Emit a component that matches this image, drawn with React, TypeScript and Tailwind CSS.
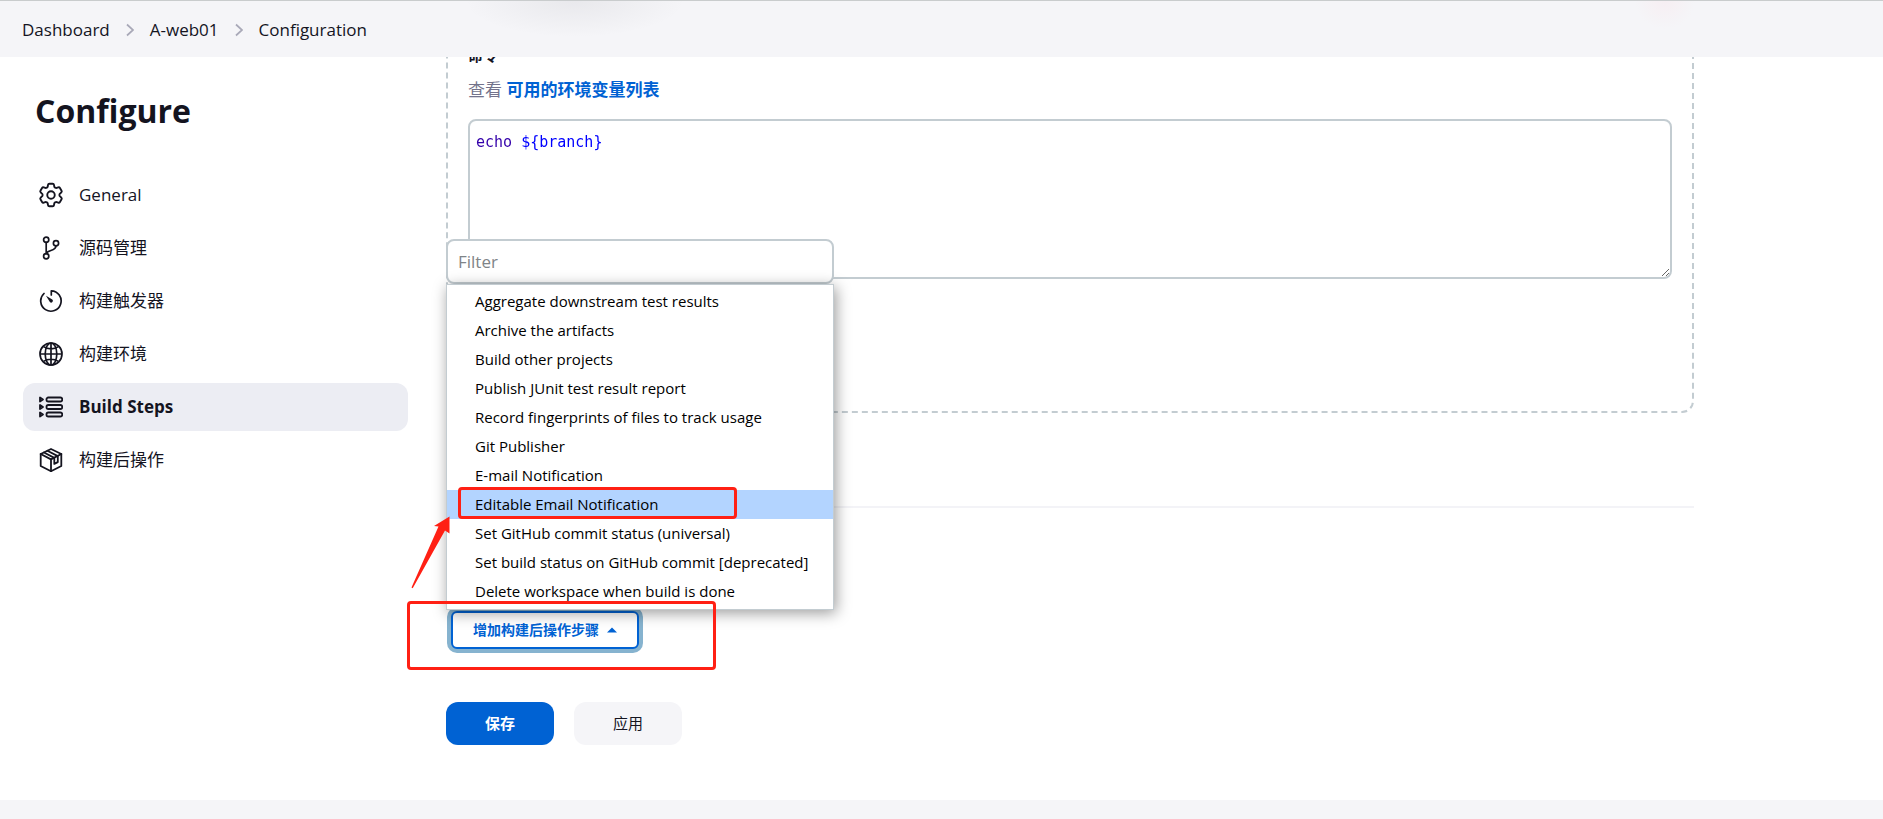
import { HiOutlineCog6Tooth } from 'react-icons/hi2'
import type { ReactNode } from 'react'

function BranchIcon() {
    return (
        <svg
            viewBox="0 0 24 24"
            className="h-6 w-6"
            fill="none"
            stroke="currentColor"
            strokeWidth="1.7"
            strokeLinecap="round"
        >
            <circle cx="7.2" cy="3.8" r="2.6" />
            <circle cx="7.2" cy="20.2" r="2.6" />
            <circle cx="17" cy="7.2" r="2.6" />
            <path d="M7.200 6.400v11.200M17 9.800c0 5.700-8.300 3.700-9.800 7.800" />
        </svg>
    )
}

function TimerIcon() {
    return (
        <svg
            viewBox="0 0 24 24"
            className="h-6 w-6"
            fill="none"
            stroke="currentColor"
            strokeWidth="1.7"
            strokeLinecap="round"
            strokeLinejoin="round"
        >
            <path d="M5 4.500A10.200 10.200 0 1 0 12.300 1.800V6" />
            <path
                d="M7 6.800l6.300 3.800a1.700 1.700 0 1 1-2.400 2.400z"
                fill="currentColor"
                stroke="none"
            />
        </svg>
    )
}

function GlobeIcon() {
    return (
        <svg
            viewBox="0 0 24 24"
            className="h-6 w-6"
            fill="none"
            stroke="currentColor"
            strokeWidth="1.7"
        >
            <circle cx="12" cy="12" r="11" />
            <ellipse cx="12" cy="12" rx="5.8" ry="11" />
            <path d="M12 1v22M1 12h22M4.500 4.600c4.200 2.900 10.800 2.900 15 0M4.500 19.400c4.200-2.900 10.800-2.900 15 0" />
        </svg>
    )
}

function StepsIcon() {
    return (
        <svg
            viewBox="0 0 24 24"
            className="h-6 w-6"
            fill="none"
            stroke="currentColor"
            strokeWidth="1.8"
            strokeLinejoin="round"
        >
            <rect x="7.500" y="2.500" width="15.700" height="4" rx="1.800" />
            <rect x="7.500" y="10" width="15.700" height="4" rx="1.800" />
            <rect x="7.500" y="17.500" width="15.700" height="4" rx="1.800" />
            <path d="M1 2.500v4l3-2zM1 10v4l3-2zM1 17.500v4l3-2z" />
        </svg>
    )
}

function PackageIcon() {
    return (
        <svg
            viewBox="0 0 24 24"
            className="h-6 w-6"
            fill="none"
            stroke="currentColor"
            strokeWidth="1.8"
            strokeLinejoin="round"
            strokeLinecap="round"
        >
            <path d="M12 1l10.300 5v12L12 23.200 1.700 18V6z" />
            <path d="M1.700 6L12 11.400 22.300 6M12 11.400v11.800" />
            <path d="M5 4.500l10.300 5.400v6l3.500-1.800V8.100L8.400 2.700" />
        </svg>
    )
}

function Chevron() {
    return (
        <svg
            viewBox="0 0 8 14"
            className="h-3.5 w-2 text-[#a9a9b8]"
            fill="none"
            stroke="currentColor"
            strokeWidth="1.7"
            aria-hidden="true"
        >
            <path d="M1 1.500L7 7l-6 5.500" />
        </svg>
    )
}

const crumbs = ['Dashboard', 'A-web01', 'Configuration']

const sections: { label: string; icon: ReactNode; active?: boolean }[] = [
    {
        label: 'General',
        icon: <HiOutlineCog6Tooth className="-m-[3px] h-[30px] w-[30px]" />,
    },
    { label: '源码管理', icon: <BranchIcon /> },
    { label: '构建触发器', icon: <TimerIcon /> },
    { label: '构建环境', icon: <GlobeIcon /> },
    { label: 'Build Steps', icon: <StepsIcon />, active: true },
    { label: '构建后操作', icon: <PackageIcon /> },
]

const postBuildActions = [
    'Aggregate downstream test results',
    'Archive the artifacts',
    'Build other projects',
    'Publish JUnit test result report',
    'Record fingerprints of files to track usage',
    'Git Publisher',
    'E-mail Notification',
    'Editable Email Notification',
    'Set GitHub commit status (universal)',
    'Set build status on GitHub commit [deprecated]',
    'Delete workspace when build is done',
]

function Breadcrumbs() {
    return (
        <nav
            aria-label="Breadcrumb"
            className="relative z-10 flex h-[57px] items-center border-t border-[#c9cccd] bg-[#f5f5f8] bg-[radial-gradient(110px_36px_at_575px_0px,rgba(70,70,80,0.07),transparent),radial-gradient(30px_28px_at_1665px_0px,rgba(255,200,210,0.15),transparent)] px-[22px] pt-0.5"
        >
            <ol className="flex items-center gap-4">
                {crumbs.map((crumb, index) => (
                    <li key={crumb} className="flex items-center gap-4">
                        {index > 0 && <Chevron />}
                        <a href="#" className="text-[17px]">
                            {crumb}
                        </a>
                    </li>
                ))}
            </ol>
        </nav>
    )
}

function Sidebar() {
    return (
        <aside className="w-[385px] shrink-0 pt-[30px]">
            <h1 className="pl-3 text-[32px] leading-12 font-bold">Configure</h1>
            <nav className="mt-9 flex flex-col gap-[5px]">
                {sections.map((section) => (
                    <a
                        key={section.label}
                        href="#"
                        className={
                            section.active
                                ? 'flex h-12 items-center gap-4 rounded-xl bg-[#ecedf3] pl-4 text-[17px] font-bold'
                                : 'flex h-12 items-center gap-4 rounded-xl pl-4 text-[17px]'
                        }
                    >
                        {section.icon}
                        {section.label}
                    </a>
                ))}
            </nav>
        </aside>
    )
}

function ActionMenu() {
    return (
        <div className="absolute bottom-full left-0 w-[388px]">
            <input
                type="text"
                placeholder="Filter"
                aria-label="Filter"
                className="block h-[45px] w-full rounded-lg border-2 border-[#c3ccd1] bg-white px-2.5 text-[17px] placeholder:text-[#7f8488]"
            />
            <ul className="border border-[#c3ccd1] bg-white pt-0.5 pb-[3px] text-[15px] text-black shadow-[2px_3px_14px_rgba(0,0,0,0.4)]">
                {postBuildActions.map((action) => (
                    <li
                        key={action}
                        className={
                            action === 'Editable Email Notification'
                                ? 'relative bg-[#b3d4ff]'
                                : ''
                        }
                    >
                        <button
                            type="button"
                            className="block h-[29px] w-full pl-7 text-left leading-[29px]"
                        >
                            {action}
                        </button>
                        {action === 'Editable Email Notification' && (
                            <HighlightedNote />
                        )}
                    </li>
                ))}
            </ul>
        </div>
    )
}

function HighlightedNote() {
    return (
        <>
            <span className="absolute -top-[3px] left-[11px] h-8 w-[279px] rounded-sm border-3 border-[#ff2014]" />
            <svg
                viewBox="0 0 42 74"
                className="absolute top-[26px] -left-9 h-[74px] w-[42px]"
                fill="#ff2014"
                aria-hidden="true"
            >
                <path d="M38.500 0.500L23 10l4.500 0.500L0.500 71.500l1.200 0.800L34 14.500l4.500 3z" />
            </svg>
        </>
    )
}

export default function App() {
    return (
        <div className="flex min-h-screen flex-col overflow-hidden bg-white font-['Open_Sans','Noto_Sans_CJK_SC',sans-serif] text-[#14141f]">
            <Breadcrumbs />

            <div className="flex grow gap-[38px] px-[23px]">
                <Sidebar />

                <main className="max-w-[1248px] min-w-0 grow">
                    <div className="-mt-6 h-[380px] rounded-xl border-2 border-dashed border-[#c3ccd1] px-5 pt-2.5">
                        <label
                            htmlFor="command"
                            className="block text-[15px] leading-5 font-bold"
                        >
                            命令
                        </label>
                        <p className="mt-[13px] text-[17px] leading-6 text-[#73738c]">
                            查看{' '}
                            <a href="#" className="font-bold text-[#0062d3]">
                                可用的环境变量列表
                            </a>
                        </p>
                        <div className="mt-[17px]">
                            <textarea
                                id="command"
                                spellCheck={false}
                                defaultValue="echo ${branch}"
                                className="block h-40 w-full rounded-lg border-2 border-[#c3ccd1] bg-[linear-gradient(90deg,#3300aa_46px,#0000ff_46px)] bg-clip-text px-1.5 py-[11px] font-['DejaVu_Sans_Mono','Noto_Sans_CJK_SC',monospace] text-[15px] leading-5 text-transparent"
                            />
                        </div>
                    </div>

                    <hr className="mt-[93px] border-t-2 border-[#f3f3f7]" />

                    <div className="relative mt-[102px] w-fit pt-px">
                        <button
                            type="button"
                            className="mx-[5px] flex h-[38px] items-center gap-2 rounded-md border-2 border-[#0062d3] bg-white px-5 text-sm font-bold text-[#0062d3] ring-4 ring-[#86b3cf]"
                        >
                            增加构建后操作步骤
                            <svg
                                viewBox="0 0 10 6"
                                className="h-1.5 w-2.5"
                                fill="currentColor"
                                aria-hidden="true"
                            >
                                <path d="M0 5.500L5 0.500l5 5z" />
                            </svg>
                        </button>
                        <ActionMenu />
                        <span className="pointer-events-none absolute -top-[9px] -left-[39px] h-[69px] w-[309px] rounded-sm border-3 border-[#ff2014]" />
                    </div>

                    <div className="mt-[53px] mb-[55px] flex gap-5">
                        <button
                            type="submit"
                            className="h-[43px] w-[108px] rounded-xl bg-[#0062d3] text-[15px] font-bold text-white"
                        >
                            保存
                        </button>
                        <button
                            type="button"
                            className="h-[43px] w-[108px] rounded-xl bg-[#f5f5f8] text-[15px]"
                        >
                            应用
                        </button>
                    </div>
                </main>
            </div>

            <footer className="h-[19px] bg-[#f5f5f8]" />
        </div>
    )
}
